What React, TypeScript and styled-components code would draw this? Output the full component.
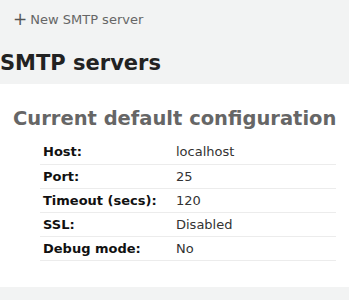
import styled, { createGlobalStyle } from 'styled-components'

const GlobalStyle = createGlobalStyle`
  html, body {
    margin: 0;
    padding: 0;
    background: #f2f3f3;
    font-family: 'DejaVu Sans', Verdana, sans-serif;
    color: #222;
  }
`

const rows: [string, string][] = [
  ['Host:', 'localhost'],
  ['Port:', '25'],
  ['Timeout (secs):', '120'],
  ['SSL:', 'Disabled'],
  ['Debug mode:', 'No'],
]

export default function App() {
  return (
    <Page>
      <GlobalStyle />
      <Toolbar>
        <AddLink href='#'>
          <Plus>+</Plus>New SMTP server
        </AddLink>
      </Toolbar>
      <Title>SMTP servers</Title>
      <Panel>
        <PanelTitle>Current default configuration</PanelTitle>
        <ConfigTable>
          <tbody>
            {rows.map(([label, value]) => (
              <Row key={label}>
                <Label>{label}</Label>
                <Value>{value}</Value>
              </Row>
            ))}
          </tbody>
        </ConfigTable>
      </Panel>
    </Page>
  )
}

const Page = styled.main`
  width: 349px;
  min-height: 300px;
`

const Toolbar = styled.div`
  height: 38px;
  display: flex;
  align-items: center;
  padding-left: 13px;
`

const AddLink = styled.a`
  display: flex;
  align-items: center;
  font-size: 13px;
  color: #666;
  text-decoration: none;
`

const Plus = styled.span`
  font-size: 17px;
  line-height: 1;
  margin-right: 3px;
  color: #555;
`

const Title = styled.h1`
  box-sizing: border-box;
  margin: 0;
  height: 46px;
  padding-top: 3px;
  display: flex;
  align-items: center;
  font-size: 21px;
  font-weight: 700;
  color: #222;
`

const Panel = styled.section`
  background: #fff;
  padding: 23px 13px 26px;
`

const PanelTitle = styled.h2`
  margin: 0 0 9px;
  font-size: 19.5px;
  font-weight: 700;
  color: #666;
  line-height: 24px;
  white-space: nowrap;
`

const ConfigTable = styled.table`
  margin-left: 27px;
  width: calc(100% - 27px);
  border-collapse: collapse;
  font-size: 13px;
`

const Row = styled.tr`
  height: 24px;
  border-bottom: 1px solid #ececec;
`

const Label = styled.td`
  width: 127px;
  padding: 0 3px;
  font-weight: 700;
  color: #111;
`

const Value = styled.td`
  padding: 0 3px;
  color: #333;
`
